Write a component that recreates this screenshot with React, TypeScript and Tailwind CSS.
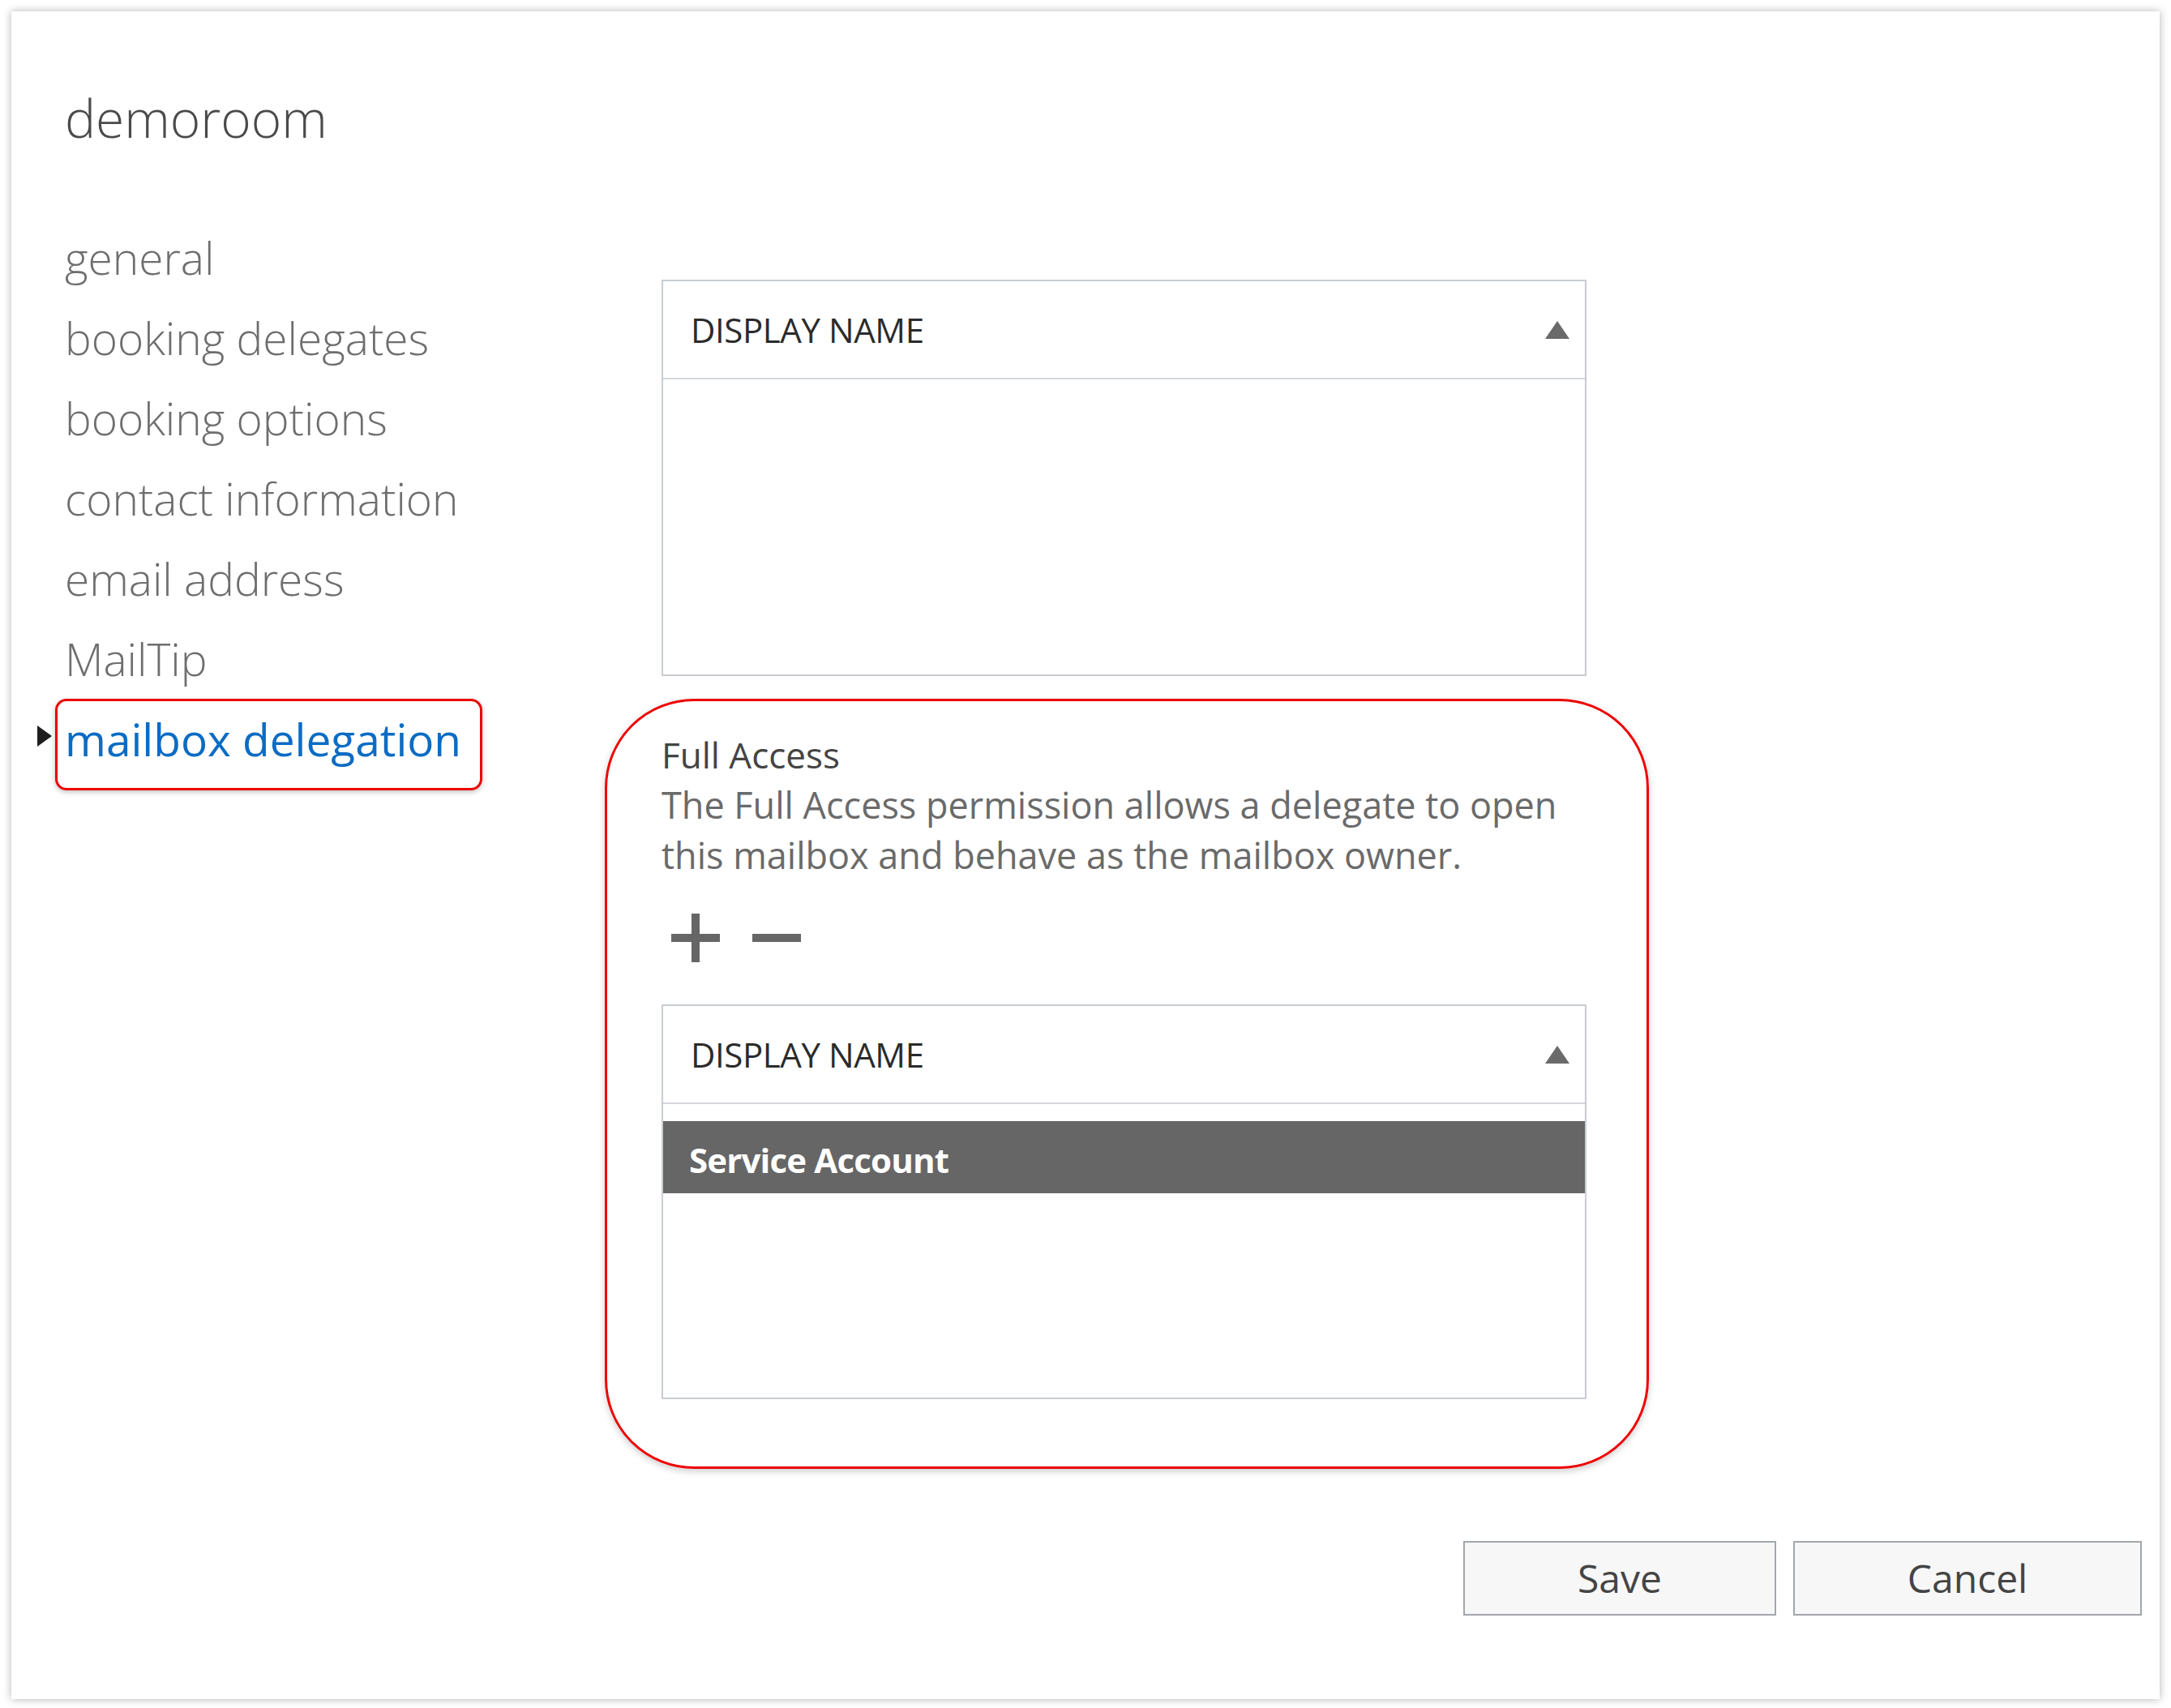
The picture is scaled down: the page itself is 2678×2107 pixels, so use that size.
import React from "react";

const navItems = [
  "general",
  "booking delegates",
  "booking options",
  "contact information",
  "email address",
  "MailTip",
  "mailbox delegation",
];

const ACTIVE = "mailbox delegation";

function SortArrow() {
  return (
    <svg width="32" height="24" viewBox="0 0 32 24" className="shrink-0">
      <path d="M16 1 L31 23 L1 23 Z" fill="#6a6a6a" />
    </svg>
  );
}

function GridHeader() {
  return (
    <div className="h-[121px] border-b-2 border-[#d3d7db] flex items-center justify-between pl-[34px] pr-[18px]">
      <span className="text-[42px] leading-none text-[#2b2b2b] tracking-[-0.01em]">
        DISPLAY NAME
      </span>
      <SortArrow />
    </div>
  );
}

function PlusIcon() {
  return (
    <svg width="60" height="60" viewBox="0 0 60 60">
      <path d="M30 0 V60 M0 30 H60" stroke="#666" strokeWidth="10" fill="none" />
    </svg>
  );
}

function MinusIcon() {
  return (
    <svg width="60" height="60" viewBox="0 0 60 60">
      <path d="M0 30 H60" stroke="#666" strokeWidth="10" fill="none" />
    </svg>
  );
}

export default function App() {
  return (
    <div className="min-h-screen bg-white p-[14px] font-['Open_Sans',sans-serif]">
      <div className="w-[2650px] h-[2082px] bg-white shadow-[0_0_10px_rgba(0,0,0,0.3)] pl-[66px] pr-[22px] pt-[92px]">
        <h1 className="text-[64px] leading-[80px] font-light text-[#4a4a4a]">demoroom</h1>

        <div className="flex mt-[82px]">
          {/* left nav */}
          <nav className="-ml-[34px] w-[770px] shrink-0">
            {navItems.map((item) => {
              const active = item === ACTIVE;
              return (
                <div key={item} className="flex items-center h-[99px]">
                  <div className="w-[34px] shrink-0 flex items-center pb-[7px]">
                    {active && (
                      <span className="block w-0 h-0 border-y-[13px] border-y-transparent border-l-[18px] border-l-[#1e1e1e]" />
                    )}
                  </div>
                  <span
                    className={
                      active
                        ? "relative text-[55px] leading-[99px] text-[#0b6cc4]"
                        : "text-[55px] leading-[99px] font-light text-[#6e6e6e]"
                    }
                  >
                    {item}
                    {active && (
                      <span className="absolute -left-[12px] -right-[26px] top-0 -bottom-[14px] border-[3px] border-[#ee0000] rounded-[14px] shadow-[0_2px_6px_rgba(0,0,0,0.25)]" />
                    )}
                  </span>
                </div>
              );
            })}
          </nav>

          {/* content */}
          <div className="w-[1141px] shrink-0 pt-[77px]">
            <div className="h-[489px] border-2 border-[#c9cdd1] bg-white">
              <GridHeader />
            </div>

            <div className="mt-[28px] -ml-[70px] -mr-[77px] border-[3px] border-[#ee0000] rounded-[110px] pl-[67px] pr-[74px] pt-[35px] pb-[83px] shadow-[0_3px_8px_rgba(0,0,0,0.2)]">
              <div className="text-[44px] leading-[62px] text-[#444]">Full Access</div>
              <p className="text-[45px] leading-[62px] text-[#6a6a6a] max-w-[1120px]">
                The Full Access permission allows a delegate to open this mailbox and behave as the mailbox owner.
              </p>

              <div className="flex items-center gap-[40px] mt-[41px] pl-[12px]">
                <PlusIcon />
                <MinusIcon />
              </div>

              <div className="mt-[52px] h-[487px] border-2 border-[#c9cdd1] bg-white">
                <GridHeader />
                <div className="pt-[21px]">
                  <div className="h-[89px] bg-[#666] flex items-center pl-[32px] pt-[6px]">
                    <span className="text-[42px] font-bold text-white tracking-[-0.02em] leading-none">
                      Service Account
                    </span>
                  </div>
                </div>
              </div>
            </div>
          </div>
        </div>

        {/* footer buttons */}
        <div className="flex justify-end gap-[21px] mt-[89px]">
          <button className="w-[386px] h-[92px] border-2 border-[#a3a7ab] bg-[#f7f7f7] text-[48px] text-[#444]">
            Save
          </button>
          <button className="w-[430px] h-[92px] border-2 border-[#a3a7ab] bg-[#f7f7f7] text-[48px] text-[#444]">
            Cancel
          </button>
        </div>
      </div>
    </div>
  );
}
